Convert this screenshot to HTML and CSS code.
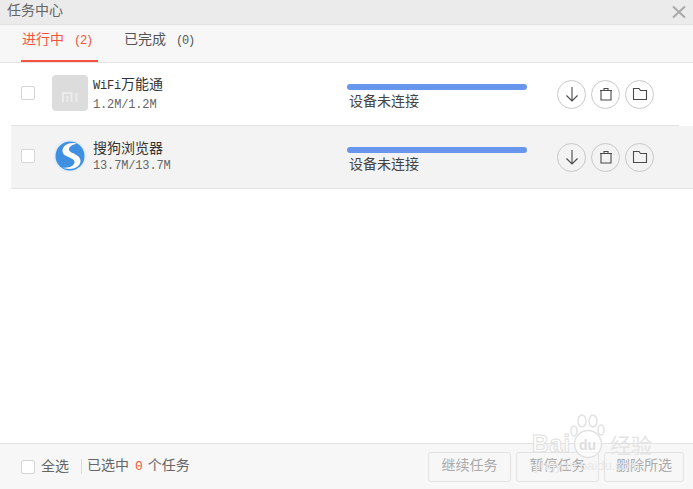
FILE: index.html
```html
<!DOCTYPE html>
<html lang="zh">
<head>
<meta charset="utf-8">
<title>任务中心</title>
<link rel="stylesheet" href="styles.css">
</head>
<body>
<div class="app">
  <header class="titlebar">
    <span class="title">任务中心</span>
    <svg class="close" width="14" height="14" viewBox="0 0 14 14"><path d="M1 1.500 13 12.500M13 1.500 1 12.500" stroke="#a8a8a8" stroke-width="2" fill="none"/></svg>
  </header>
  <nav class="tabs">
    <div class="tab active">进行中<span class="count">(2)</span></div>
    <div class="tab">已完成<span class="count">(0)</span></div>
  </nav>
  <main class="list">
    <section class="row">
      <span class="check"></span>
      <div class="appicon mi"><svg width="17" height="10" viewBox="0 0 17 10"><path d="M1 10V1H9.500V10M5.200 4V10M14.500 1V10" stroke="#ececec" stroke-width="2" fill="none"/></svg></div>
      <div class="info"><div class="name"><span class="latin">WiFi</span>万能通</div><div class="size">1.2M/1.2M</div></div>
      <div class="progress"><div class="bar"></div><div class="status">设备未连接</div></div>
      <div class="actions">
        <span class="round"><svg width="18" height="18" viewBox="0 0 18 18"><path d="M9 2V16M3.500 10.500 9 16l5.500-5.500" class="ic"/></svg></span>
        <span class="round"><svg width="18" height="18" viewBox="0 0 18 18"><path d="M3 5.500h12M4 5.500V15h10V5.500M7 5.500v-2h4v2" class="ic"/></svg></span>
        <span class="round"><svg width="18" height="18" viewBox="0 0 18 18"><path d="M2.500 3.500h5.500l1.500 2h6v9h-13Z" class="ic"/></svg></span>
      </div>
    </section>
    <section class="row alt">
      <span class="check"></span>
      <div class="appicon sogou"><svg width="34" height="34" viewBox="0 0 34 34"><circle cx="17" cy="17" r="16.500" fill="#e6eef5"/><circle cx="17" cy="17" r="14.500" fill="#3f90e0"/><path d="M24 4.500C17 2.500 9 6 9.500 12.500 10 18.500 21 18 21.500 22.500 22 26.500 16 29.500 9.500 28.500 17 32 28 29 27.500 21.500 27 14.500 16.500 15 16 10.500 15.700 7.500 20 5.500 24 4.500Z" fill="#fff"/></svg></div>
      <div class="info"><div class="name">搜狗浏览器</div><div class="size">13.7M/13.7M</div></div>
      <div class="progress"><div class="bar"></div><div class="status">设备未连接</div></div>
      <div class="actions">
        <span class="round"><svg width="18" height="18" viewBox="0 0 18 18"><path d="M9 2V16M3.500 10.500 9 16l5.500-5.500" class="ic"/></svg></span>
        <span class="round"><svg width="18" height="18" viewBox="0 0 18 18"><path d="M3 5.500h12M4 5.500V15h10V5.500M7 5.500v-2h4v2" class="ic"/></svg></span>
        <span class="round"><svg width="18" height="18" viewBox="0 0 18 18"><path d="M2.500 3.500h5.500l1.500 2h6v9h-13Z" class="ic"/></svg></span>
      </div>
    </section>
  </main>
  <footer class="footer">
    <span class="check"></span>
    <span class="all">全选</span>
    <span class="sep"></span>
    <span class="selected">已选中<em class="zero">0</em>个任务</span>
    <div class="buttons">
      <span class="btn">继续任务</span>
      <span class="btn">暂停任务</span>
      <span class="btn narrow">删除所选</span>
    </div>
  </footer>
  <div class="watermark">
    <svg class="paw" width="36" height="46" viewBox="0 0 36 46"><g fill="none" stroke="#e2e2e2" stroke-width="1.500"><ellipse cx="4" cy="17" rx="3" ry="5"/><ellipse cx="12" cy="7" rx="4" ry="6"/><ellipse cx="23" cy="7" rx="4" ry="6"/><ellipse cx="31" cy="16" rx="3" ry="5"/><circle cx="18" cy="30" r="13.500" fill="#fff" fill-opacity=".6"/></g></svg>
    <span class="wm-b">Bai</span><span class="wm-d">du</span><span class="wm-j">经验</span><span class="wm-u">jingyan.baidu.com</span>
  </div>
</div>
</body>
</html>
```
FILE: styles.css
```css
* { box-sizing: border-box; }
html, body { margin: 0; padding: 0; }
body { width: 693px; height: 489px; overflow: hidden; background: #fff; font-family: "Noto Sans CJK SC", "Liberation Sans", sans-serif; font-size: 14px; color: #555; }
.app { position: relative; width: 693px; height: 489px; display: flex; flex-direction: column; }
.titlebar { height: 25px; flex: none; background: #ebebeb; border-bottom: 1px solid #e2e2e2; display: flex; align-items: center; justify-content: space-between; padding: 0 7px 6px 7px; }
.title { font-size: 14px; line-height: 18px; color: #666; }
.close { margin-top: 5px; }
.tabs { height: 38px; flex: none; background: #f7f7f7; border-bottom: 1px solid #e3e3e3; display: flex; padding-left: 21px; gap: 25px; }
.tab { width: 77px; height: 37px; padding: 3px 0 0 1px; line-height: 20px; font-size: 14px; color: #555; white-space: nowrap; }
.tab.active { color: #f5533d; border-bottom: 2px solid #f5533d; }
.count { font-family: "Liberation Mono", monospace; font-size: 12px; letter-spacing: -1.2px; margin-left: 10px; }
.list { flex: 1; }
.row { height: 63px; margin-left: 11px; display: flex; align-items: center; padding-left: 10px; position: relative; border-bottom: 1px solid #e3e3e3; margin-right: 14px; }
.row.alt { background: #f3f3f3; margin-right: 0; }
.check { flex: none; width: 14px; height: 14px; border: 1px solid #d5d5d5; border-radius: 2px; background: #fff; margin-top: -3px; }
.appicon { flex: none; width: 36px; height: 36px; margin-left: 17px; margin-top: -2px; display: flex; align-items: center; justify-content: center; }
.mi { background: #dcdcdc; border-radius: 4px; padding-top: 7px; }
.info { flex: none; width: 254px; margin-left: 5px; margin-top: -1px; }
.name { font-size: 14px; line-height: 18px; color: #333; white-space: nowrap; }
.latin { font-family: "Liberation Mono", monospace; font-size: 12px; letter-spacing: -0.2px; }
.size { font-size: 12px; line-height: 18px; color: #666; font-family: "Liberation Mono", monospace; letter-spacing: -0.15px; margin-top: 1px; }
.progress { flex: none; width: 180px; margin-top: 5px; }
.bar { height: 6px; background: #6796ec; border-radius: 3px; }
.status { font-size: 14px; line-height: 18px; margin-top: 1px; margin-left: 2px; color: #444; }
.actions { flex: none; display: flex; gap: 5px; margin-left: 30px; }
.round { width: 29px; height: 29px; border: 1px solid #c8c8c8; border-radius: 50%; display: flex; align-items: center; justify-content: center; }
.ic { fill: none; stroke: #4a4a4a; stroke-width: 1.100; }
.footer { height: 46px; flex: none; background: #f7f7f7; border-top: 1px solid #e3e3e3; display: flex; align-items: center; padding-left: 21px; padding-right: 9px; }
.footer .check { margin-top: 0; }
.all { margin-left: 6px; line-height: 20px; color: #666; margin-top: -4px; }
.sep { width: 1px; height: 15px; background: #dcdcdc; margin-left: 12px; margin-right: 5px; }
.selected { line-height: 20px; color: #666; margin-top: -3px; }
.zero { font-style: normal; color: #f5533d; font-family: "Liberation Mono", monospace; font-size: 13px; margin: 0 5px 0 6px; }
.buttons { margin-left: auto; display: flex; gap: 5px; }
.btn { width: 83px; height: 30px; border: 1px solid #e3e3e3; border-radius: 3px; text-align: center; line-height: 22px; color: #aaa; font-size: 14px; }
.btn.narrow { width: 80px; }
.watermark { position: absolute; left: 532px; top: 414px; width: 160px; height: 60px; }
.paw { position: absolute; left: 38px; top: 0; }
.wm-b { position: absolute; left: 0; top: 17px; font-family: "Liberation Sans", sans-serif; font-size: 23px; line-height: 26px; font-weight: 700; color: #fff; -webkit-text-stroke: 1px #e0e0e0; letter-spacing: 1px; }
.wm-d { position: absolute; left: 47px; top: 23px; font-family: "Liberation Sans", sans-serif; font-size: 14px; line-height: 16px; font-weight: 700; color: #dedede; }
.wm-j { position: absolute; left: 78px; top: 17px; font-size: 21px; line-height: 26px; color: #e4e4e4; }
.wm-u { position: absolute; left: 3px; top: 44px; font-family: "Liberation Sans", sans-serif; font-size: 13px; line-height: 16px; color: #e8e8e8; }
```
